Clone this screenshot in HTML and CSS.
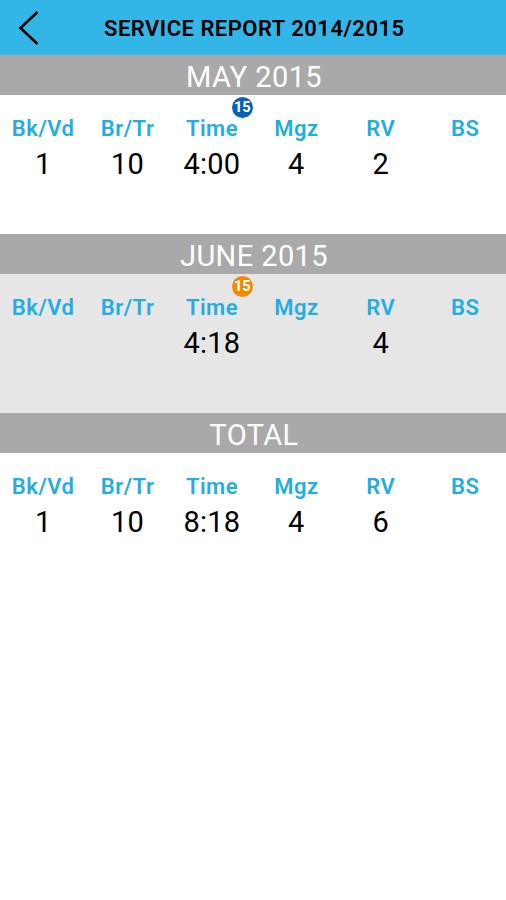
FILE: index.html
```html
<!DOCTYPE html>
<html lang="en">
<head>
<meta charset="utf-8">
<title>Service Report</title>
<link rel="stylesheet" href="styles.css">
</head>
<body>
<header class="bar">
  <svg class="back" width="22" height="36" viewBox="0 0 22 36"><path d="M19.500 2 2.500 18 19.500 34"/></svg>
  <h1>SERVICE REPORT 2014/2015</h1>
</header>
<section class="month">
  <h2>MAY 2015</h2>
  <div class="grid">
    <div class="col"><b>Bk/Vd</b><span>1</span></div>
    <div class="col"><b>Br/Tr</b><span>10</span></div>
    <div class="col"><b>Time</b><span>4:00</span><i class="badge blue">15</i></div>
    <div class="col"><b>Mgz</b><span>4</span></div>
    <div class="col"><b>RV</b><span>2</span></div>
    <div class="col"><b>BS</b></div>
  </div>
</section>
<section class="month shaded">
  <h2>JUNE 2015</h2>
  <div class="grid">
    <div class="col"><b>Bk/Vd</b></div>
    <div class="col"><b>Br/Tr</b></div>
    <div class="col"><b>Time</b><span>4:18</span><i class="badge orange">15</i></div>
    <div class="col"><b>Mgz</b></div>
    <div class="col"><b>RV</b><span>4</span></div>
    <div class="col"><b>BS</b></div>
  </div>
</section>
<section class="month">
  <h2>TOTAL</h2>
  <div class="grid">
    <div class="col"><b>Bk/Vd</b><span>1</span></div>
    <div class="col"><b>Br/Tr</b><span>10</span></div>
    <div class="col"><b>Time</b><span>8:18</span></div>
    <div class="col"><b>Mgz</b><span>4</span></div>
    <div class="col"><b>RV</b><span>6</span></div>
    <div class="col"><b>BS</b></div>
  </div>
</section>
</body>
</html>
```
FILE: styles.css
```css
* { box-sizing: border-box; }
body { margin: 0; height: 900px; background: #fff; font-family: Roboto, sans-serif; color: #000; overflow: hidden; }
.bar { height: 55px; background: #33b5e7; display: flex; align-items: center; padding-left: 18px; }
.back { flex: none; fill: none; stroke: #000; stroke-width: 2.6; }
h1 { margin: 3px 0 0 64px; font-size: 22px; line-height: 30px; font-weight: 600; letter-spacing: .49px; white-space: nowrap; }
.month { height: 179px; }
.shaded { background: #e6e6e6; }
h2 { margin: 0; height: 40px; padding-left: 2px; background: #a9a9a9; color: #fff; text-align: center; font-size: 29px; font-weight: 400; line-height: 44px; letter-spacing: .4px; }
.grid { display: grid; grid-template-columns: repeat(6, 84.4px); padding: 20px 0 0 1px; }
.col { position: relative; display: flex; flex-direction: column; align-items: center; }
.col b { color: #25addf; font-size: 22px; font-weight: 600; line-height: 28px; letter-spacing: .5px; }
.col span { font-size: 29px; line-height: 36px; margin-top: 3px; letter-spacing: .2px; }
.badge { position: absolute; left: 62px; top: -18px; width: 21px; height: 21px; border-radius: 50%; color: #fff; font-size: 14.5px; font-style: normal; font-weight: 700; line-height: 22px; text-align: center; }
.blue { background: #0a62b5; }
.orange { background: #f08a00; }
```
